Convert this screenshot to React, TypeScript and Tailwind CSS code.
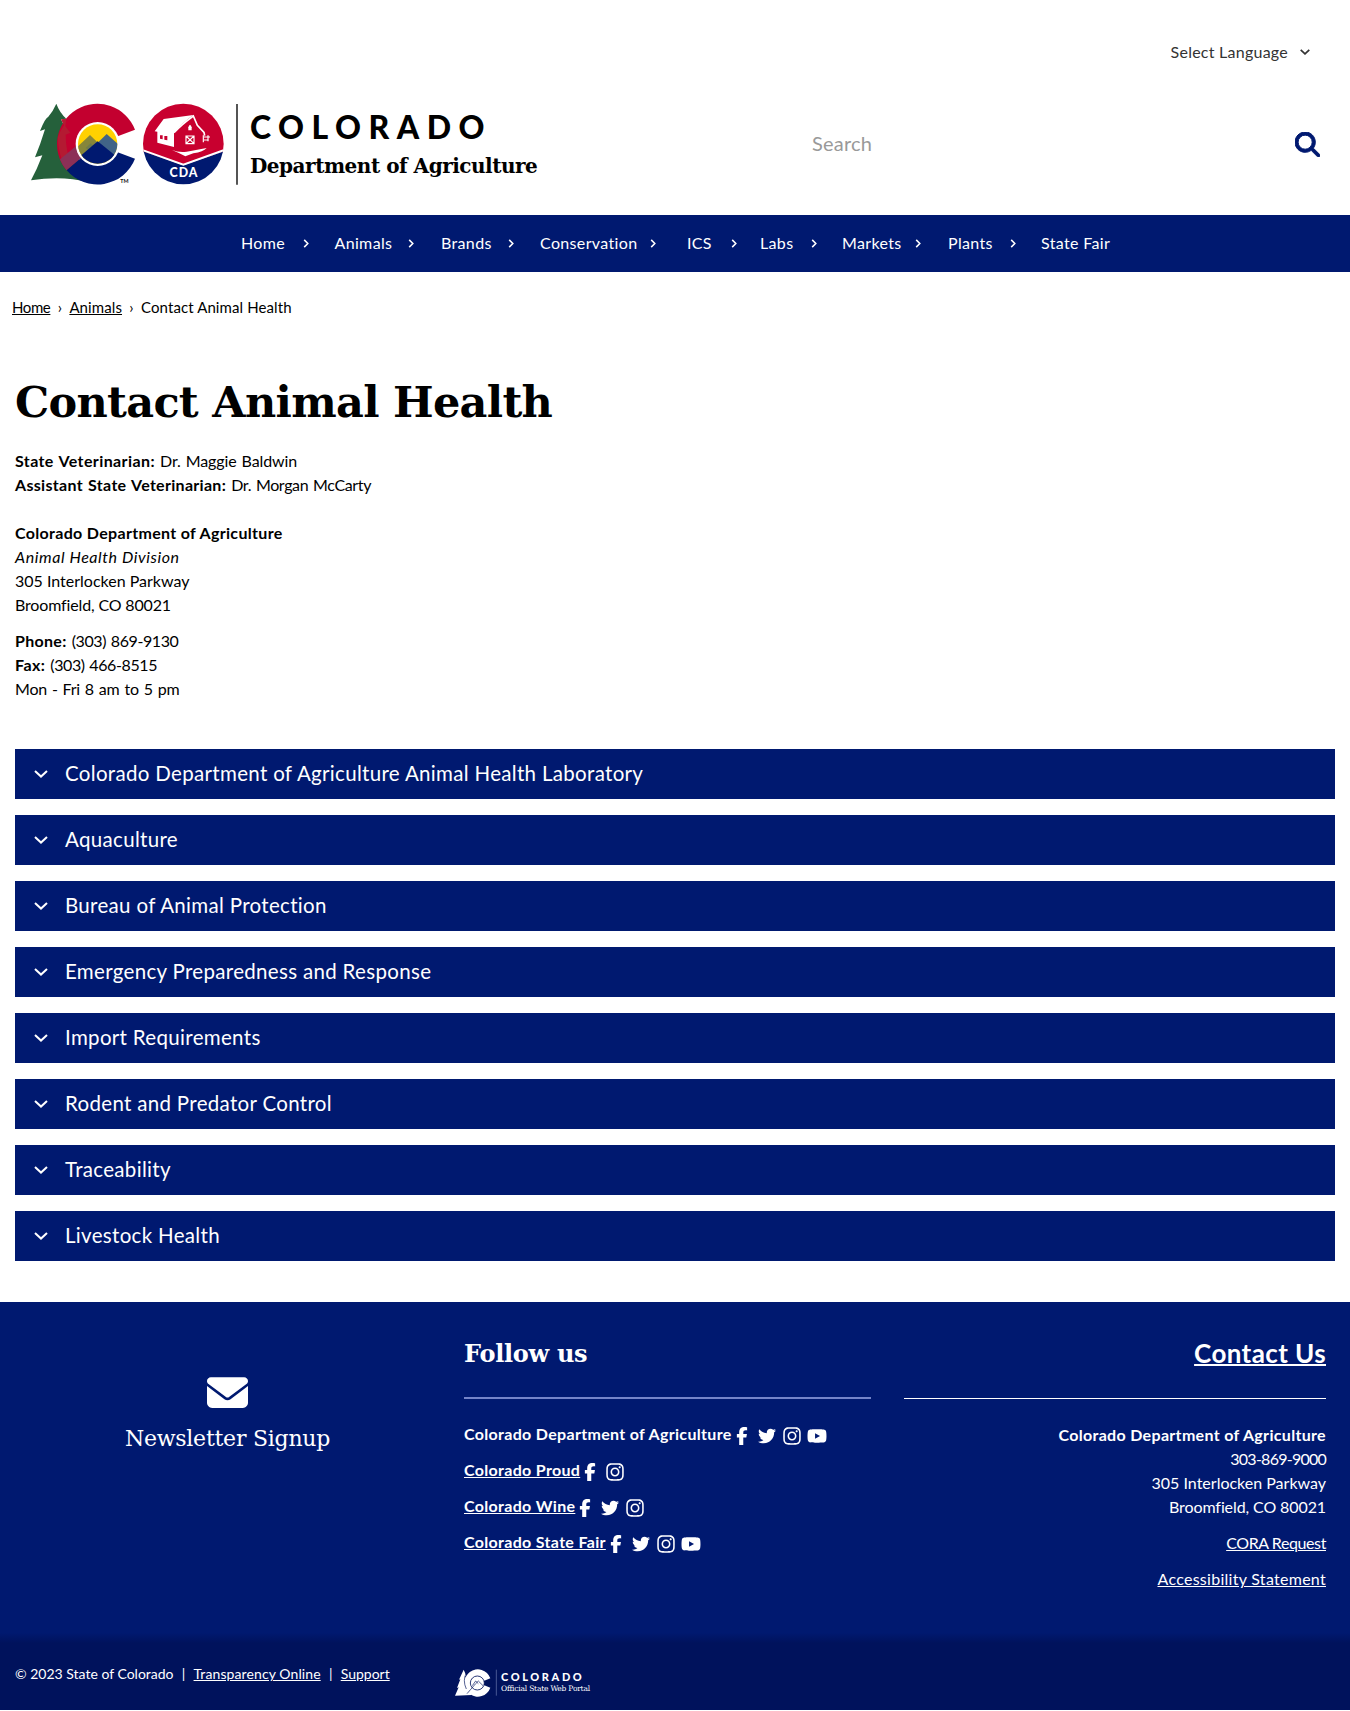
import { FaEnvelope, FaFacebookF, FaInstagram, FaMagnifyingGlass, FaTwitter, FaYoutube } from "react-icons/fa6";

const navItems = ["Home", "Animals", "Brands", "Conservation", "ICS", "Labs", "Markets", "Plants", "State Fair"];

const sections = [
  "Colorado Department of Agriculture Animal Health Laboratory",
  "Aquaculture",
  "Bureau of Animal Protection",
  "Emergency Preparedness and Response",
  "Import Requirements",
  "Rodent and Predator Control",
  "Traceability",
  "Livestock Health",
];

type Network = "facebook" | "twitter" | "instagram" | "youtube";

const socials: { name: string; link: boolean; networks: Network[] }[] = [
  { name: "Colorado Department of Agriculture", link: false, networks: ["facebook", "twitter", "instagram", "youtube"] },
  { name: "Colorado Proud", link: true, networks: ["facebook", "instagram"] },
  { name: "Colorado Wine", link: true, networks: ["facebook", "twitter", "instagram"] },
  { name: "Colorado State Fair", link: true, networks: ["facebook", "twitter", "instagram", "youtube"] },
];

function StateEmblem() {
  return (
    <svg viewBox="0 0 339 276" className="h-[92px] w-[113px] shrink-0">
      <defs>
        <clipPath id="sun">
          <circle cx="218" cy="138" r="59" />
        </clipPath>
      </defs>
      <path
        d="M94 17 Q104 44 124 62 L108 64 Q118 88 136 104 L122 110 Q130 150 160 180 L190 252 Q110 232 18 247 Q36 214 52 172 L30 178 Q46 140 60 94 L45 99 Q60 60 70 56 Q84 40 94 17Z"
        fill="#25603b"
      />
      <path d="M330 95 A121 121 0 1 0 125 217 L218 138 L270 118Z" fill="#c3002f" />
      <path d="M124 62 L108 64 Q112 74 117 82 Q104 100 99 118 Q98 150 112 190 L125 217 L140 200 Q122 160 122 110 L136 104 Q128 95 121 84Z" fill="#b41a32" />
      <path d="M105 184 L158 140 L218 138 L125 217 Q112 202 105 184Z" fill="#8c3057" />
      <path d="M125 217 A121 121 0 0 0 330 182 L270 160 L218 138Z" fill="#001970" />
      <circle cx="218" cy="138" r="66" fill="#fff" />
      <g clipPath="url(#sun)">
        <path d="M150 70 H290 V210 H150Z" fill="#ffd100" />
        <path d="M140 162 L195 111 L222 137 L160 200Z" fill="#86863a" />
        <path d="M212 140 L245 108 L300 156 L270 200Z" fill="#416487" />
        <path d="M182 150 L197 136 L207 145 L195 158Z" fill="#6f7b4c" />
        <path d="M150 212 L150 188 L218 130 L292 190 V212Z" fill="#001970" />
      </g>
      <text x="286" y="256" fontFamily="Lato, sans-serif" fontWeight="700" fontSize="16" fill="#111">TM</text>
    </svg>
  );
}

function AgricultureEmblem() {
  return (
    <svg viewBox="0 0 315 276" className="h-[92px] w-[105px] shrink-0">
      <defs>
        <clipPath id="seal">
          <circle cx="136" cy="138" r="121" />
        </clipPath>
      </defs>
      <g clipPath="url(#seal)">
        <path d="M10 10 H262 V160 L136 202 L10 160Z" fill="#c8002f" />
        <path d="M10 158 L136 202 L262 158 V270 H10Z" fill="#001970" />
        <path d="M10 155 L136 200 L262 155" fill="none" stroke="#fff" strokeWidth="6" />
      </g>
      <path d="M50 100 L77 63 L166 51 Q128 78 108 104 L108 147 L58 134 V101Z" fill="#fff" />
      <path d="M66 112 H74 V124 L66 122Z M79 114 H88 V127 L79 125Z" fill="#c8002f" />
      <path d="M108 104 Q130 80 166 54 L178 82 L198 103 L200 113" fill="none" stroke="#fff" strokeWidth="5" />
      <path d="M151 88 Q156 72 161 88 V97 H151Z" fill="#fff" />
      <path d="M144 114 H168 V137 H144Z M144 114 L168 137 M168 114 L144 137" fill="none" stroke="#fff" strokeWidth="3.5" />
      <path d="M196 112 V133 M198 117 H216 M210 112 V130 M198 126 H212" stroke="#fff" strokeWidth="3.5" />
      <path d="M102 156 Q122 164 146 161 L206 150 Q196 162 166 166 L142 175 Q126 166 102 156Z" fill="#fff" />
      <text x="138" y="236" textAnchor="middle" fontFamily="Lato, sans-serif" fontWeight="900" fontSize="37" letterSpacing="3" fill="#fff">
        CDA
      </text>
      <path d="M297 18 V260" stroke="#333" strokeWidth="5" />
    </svg>
  );
}

function PortalEmblem() {
  return (
    <svg viewBox="0 0 135 84" className="h-7 w-[45px] shrink-0">
      <path d="M26 2 L34 20 L30 22 L39 38 L36 42 L50 78 L0 80 L11 55 L6 57 L16 31 L12 32Z" fill="#fff" />
      <path d="M106 28 A40 41 0 1 0 106 56 L86 48 A19 19 0 1 1 86 36Z" fill="#fff" />
      <circle cx="67" cy="42" r="21" fill="#fff" stroke="#00125c" strokeWidth="2.5" />
      <path d="M36 74 L62 44 L70 36 L84 50 M52 50 L62 36 L70 44" fill="none" stroke="#00125c" strokeWidth="2" />
      <path d="M34 12 Q22 34 34 60" fill="none" stroke="#00125c" strokeWidth="2" />
      <path d="M124 2 V80" stroke="#5566a0" strokeWidth="2.5" />
    </svg>
  );
}

function Chevron({ className }: { className: string }) {
  return (
    <svg viewBox="0 0 14 8" className={className} fill="none" stroke="currentColor">
      <path d="M1 1 L7 6.6 L13 1" />
    </svg>
  );
}

function NavChevron() {
  return (
    <svg viewBox="0 0 6 10" className="h-[9px] w-1.5" fill="none" stroke="currentColor" strokeWidth="1.7">
      <path d="M1 1 L5 5 L1 9" />
    </svg>
  );
}

function SocialIcon({ network }: { network: Network }) {
  if (network === "facebook") return <FaFacebookF className="size-[18px]" />;
  if (network === "twitter") return <FaTwitter className="size-[18px]" />;
  if (network === "instagram") return <FaInstagram className="-mx-px size-[20px]" />;
  return <FaYoutube className="-mx-px size-[20px]" />;
}

export default function App() {
  return (
    <div className="w-[1350px] bg-white font-['Lato',sans-serif] text-base leading-6 text-black">
      <header className="flex h-[215px] flex-col pt-10">
        <div className="flex h-6 items-center justify-end gap-3 pr-10 text-[#333]">
          <span className="tracking-[0.25px]">Select Language</span>
          <Chevron className="h-1.5 w-[10px] stroke-[2.4]" />
        </div>
        <div className="mt-[34px] flex h-[92px] pr-[30px] pl-[25px]">
          <StateEmblem />
          <AgricultureEmblem />
          <div className="flex flex-col pt-[13px] pl-[7px]">
            <span className="text-[32px] leading-8 font-black tracking-[7.5px]">COLORADO</span>
            <span className="mt-[11px] font-['DejaVu_Serif',serif] text-xl leading-6 font-bold tracking-[-0.48px] whitespace-nowrap">
              Department of Agriculture
            </span>
          </div>
          <div className="ml-auto flex w-[508px] items-center justify-between">
            <span className="pb-0.5 text-xl leading-7 tracking-[0.2px] text-[#999]">Search</span>
            <FaMagnifyingGlass className="size-[25px] stroke-[#001970] stroke-[20] text-[#001970]" />
          </div>
        </div>
      </header>

      <nav className="grid h-[57px] grid-cols-[62px_31.5px_73.5px_33px_67px_32px_110px_37px_43.5px_29.5px_51px_31px_73px_33px_62px_31px_auto] items-center bg-[#001970] pb-px pl-[241px] tracking-[0.35px] text-white">
        {navItems.map((item, i) => (
          <div key={item} className="contents">
            <a className="whitespace-nowrap">{item}</a>
            {i < navItems.length - 1 && <NavChevron />}
          </div>
        ))}
      </nav>

      <div className="mt-[23px] flex h-6 items-center pl-3 text-[15px] tracking-[0.1px]">
        <a className="tracking-[-0.4px] underline">Home</a>
        <span className="w-[19px] text-center">›</span>
        <a className="underline">Animals</a>
        <span className="w-[19px] text-center">›</span>
        <span>Contact Animal Health</span>
      </div>

      <main className="px-[15px]">
        <h1 className="mt-[57px] font-['DejaVu_Serif',serif] text-[43px] leading-[52px] font-bold tracking-[-0.7px]">
          Contact Animal Health
        </h1>
        <p className="mt-[21px] [word-spacing:1px]">
          <b className="tracking-[0.4px]">State Veterinarian:</b> <span className="tracking-[-0.1px]">Dr. Maggie Baldwin</span>
          <br />
          <b className="tracking-[0.3px]">Assistant State Veterinarian:</b> <span className="tracking-[-0.35px]">Dr. Morgan McCarty</span>
        </p>
        <p className="mt-6">
          <b className="tracking-[0.32px]">Colorado Department of Agriculture</b>
          <br />
          <i className="tracking-[0.58px]">Animal Health Division</i>
          <br />
          305 Interlocken Parkway
          <br />
          <span className="tracking-[-0.15px]">Broomfield, CO 80021</span>
        </p>
        <p className="mt-3 [word-spacing:1px]">
          <b className="tracking-[0.3px]">Phone:</b> <span className="tracking-[-0.4px]">(303) 869-9130</span>
          <br />
          <b className="tracking-[0.4px]">Fax:</b> <span className="tracking-[-0.4px]">(303) 466-8515</span>
          <br />
          <span className="tracking-[-0.2px]">Mon - Fri 8 am to 5 pm</span>
        </p>

        <div className="mt-12 flex flex-col gap-4">
          {sections.map((title) => (
            <div key={title} className="flex h-[50px] items-center gap-[17px] bg-[#001970] pl-[19px] text-[20.5px] tracking-[0.32px] text-white">
              <Chevron className="h-2 w-3.5 stroke-2" />
              <span className="pb-0.5">{title}</span>
            </div>
          ))}
        </div>
      </main>

      <footer className="mt-[41px] bg-[#001970] text-white">
        <div className="grid h-[341px] grid-cols-[455px_416px_422px] bg-linear-to-b from-[#001970] from-97% to-[#00125c]">
          <div className="flex flex-col items-center pt-[70px]">
            <FaEnvelope className="size-[41px]" />
            <span className="mt-2.5 font-['DejaVu_Serif',serif] text-[22px] leading-8 tracking-[-0.24px]">Newsletter Signup</span>
          </div>
          <div className="pt-9 pl-[9px]">
            <h2 className="font-['DejaVu_Serif',serif] text-2xl leading-8 font-bold tracking-[-0.3px]">Follow us</h2>
            <div className="mt-[27px] h-0.5 bg-[#7484c8]" />
            <ul className="mt-[23px] flex flex-col gap-3">
              {socials.map((row) => (
                <li key={row.name} className="flex h-6 items-center font-bold tracking-[0.32px]">
                  {row.link ? <a className="underline">{row.name}</a> : <span>{row.name}</span>}
                  <span className="ml-px flex items-center gap-[7px] pt-[3px]">
                    {row.networks.map((network) => (
                      <SocialIcon key={network} network={network} />
                    ))}
                  </span>
                </li>
              ))}
            </ul>
          </div>
          <div className="ml-[33px] w-[422px] pt-[35px] text-right">
            <h2 className="text-[26px] leading-8 font-bold tracking-[0.4px] underline decoration-2">Contact Us</h2>
            <div className="mt-[29px] h-px bg-white" />
            <p className="mt-6">
              <b className="tracking-[0.32px]">Colorado Department of Agriculture</b>
              <br />
              <span className="tracking-[-0.75px]">303-869-9000</span>
              <br />
              305 Interlocken Parkway
              <br />
              <span className="tracking-[-0.1px]">Broomfield, CO 80021</span>
            </p>
            <p className="mt-3 tracking-[-0.4px] underline">CORA Request</p>
            <p className="mt-3 tracking-[0.28px] underline">Accessibility Statement</p>
          </div>
        </div>
        <div className="grid h-[67px] grid-cols-[440px_auto] bg-[#00125c] pl-[15px]">
          <div className="flex pt-[21px] text-sm leading-5">
            <span>© 2023 State of Colorado</span>
            <span className="w-5 text-center">|</span>
            <a className="tracking-[0.1px] underline">Transparency Online</a>
            <span className="w-5 text-center">|</span>
            <a className="underline">Support</a>
          </div>
          <div className="flex h-7 pt-[26px]">
            <PortalEmblem />
            <div className="flex flex-col pt-0.5 pl-px whitespace-nowrap">
              <span className="text-[11px] leading-[12px] font-black tracking-[2.6px]">COLORADO</span>
              <span className="font-['DejaVu_Serif',serif] text-[7.5px] leading-[12px] tracking-[-0.2px]">Official State Web Portal</span>
            </div>
          </div>
        </div>
      </footer>
    </div>
  );
}
